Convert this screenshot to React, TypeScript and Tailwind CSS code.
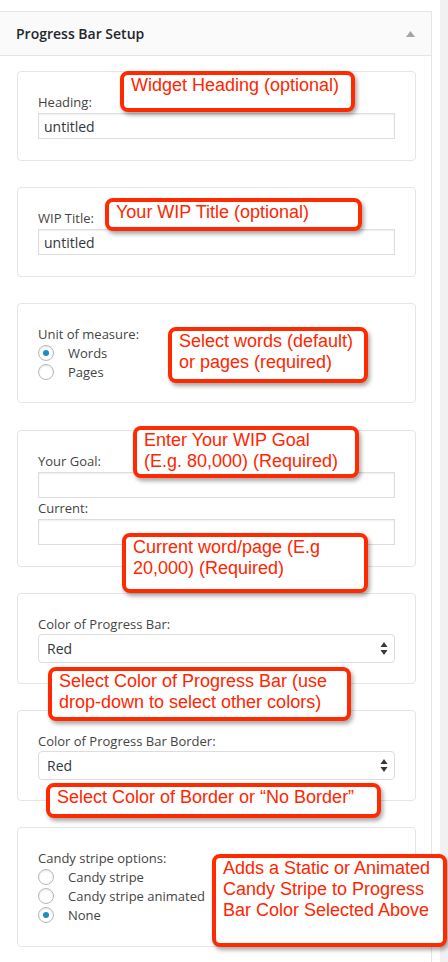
import type { ReactNode } from "react";

const wpFont = "font-['Open_Sans',Lato,sans-serif]";
const labelCls = "block text-[13px] leading-[18px] text-[#444]";

const callouts = [
  {
    pos: "left-[120px] top-[71px] w-[235px] h-[41px]",
    lines: ["Widget Heading (optional)"],
  },
  {
    pos: "left-[105px] top-[198px] w-[257px] h-[33px]",
    lines: ["Your WIP Title (optional)"],
  },
  {
    pos: "left-[168px] top-[327px] w-[200px] h-[56px]",
    lines: ["Select words (default)", "or pages (required)"],
  },
  {
    pos: "left-[133px] top-[426px] w-[226px] h-[52px]",
    lines: ["Enter Your WIP Goal", "(E.g. 80,000) (Required)"],
  },
  {
    pos: "left-[122px] top-[533px] w-[246px] h-[60px]",
    lines: ["Current word/page (E.g", "20,000) (Required)"],
  },
  {
    pos: "left-[48px] top-[667px] w-[303px] h-[54px]",
    lines: ["Select Color of Progress Bar (use", "drop-down to select other colors)"],
  },
  {
    pos: "left-[46px] top-[783px] w-[335px] h-[35px]",
    lines: ["Select Color of Border or \u201cNo Border\u201d"],
  },
  {
    pos: "left-[212px] top-[854px] w-[235px] h-[93px]",
    lines: ["Adds a Static or Animated", "Candy Stripe to Progress", "Bar Color Selected Above"],
  },
];

function Card({ children, className = "" }: { children: ReactNode; className?: string }) {
  return (
    <div className={`rounded-[4px] border border-[#e5e5e5] bg-white px-[20px] pt-[21px] ${className}`}>
      {children}
    </div>
  );
}

function TextInput({ value = "" }: { value?: string }) {
  return (
    <div className="mt-[2px] flex h-[26px] items-center border border-[#ddd] bg-white pl-[5px] text-[14px] text-[#32373c] shadow-[inset_0_1px_2px_rgba(0,0,0,0.07)]">
      {value}
    </div>
  );
}

function SelectBox({ value }: { value: string }) {
  return (
    <div className="mt-[1px] flex h-[29px] items-center justify-between rounded-[4px] border border-[#ddd] bg-white pl-[8px] pr-[6px] text-[14px] text-[#32373c]">
      <span>{value}</span>
      <svg width="8" height="13" viewBox="0 0 8 13">
        <path d="M4 0 L7.5 5 L0.5 5 Z" fill="#32373c" />
        <path d="M0.5 8 L7.5 8 L4 13 Z" fill="#32373c" />
      </svg>
    </div>
  );
}

function Radio({ label, checked = false }: { label: string; checked?: boolean }) {
  return (
    <div className="flex h-[19px] items-center">
      <span className="flex h-[16px] w-[16px] shrink-0 items-center justify-center rounded-full border border-[#b4b9be] bg-white shadow-[inset_0_1px_2px_rgba(0,0,0,0.1)]">
        {checked && <span className="h-[6px] w-[6px] rounded-full bg-[#1e8cbe]" />}
      </span>
      <span className="ml-[14px] text-[13px] leading-[18px] text-[#444]">{label}</span>
    </div>
  );
}

export default function App() {
  return (
    <div className={`relative flex h-[962px] overflow-hidden bg-white ${wpFont}`}>
      <div className="w-[440px] shrink-0 pt-[11px]">
        <div className="w-[432px] border-y border-r border-[#e5e5e5] bg-white">
          <div className="flex h-[44px] items-center justify-between border-b border-[#e5e5e5] bg-[#fafafa] pl-[16px] pr-[16px]">
            <span className="text-[14px] font-semibold text-[#23282d]">Progress Bar Setup</span>
            <svg width="9" height="6" viewBox="0 0 9 6">
              <path d="M4.5 0 L9 6 L0 6 Z" fill="#a0a5aa" />
            </svg>
          </div>

          <div className="ml-[17px] mr-[15px] flex flex-col gap-[26px] pb-[40px] pt-[15px]">
            <Card className="pb-[21px]">
              <label className={labelCls}>Heading:</label>
              <TextInput value="untitled" />
            </Card>

            <Card className="pb-[21px]">
              <label className={labelCls}>WIP Title:</label>
              <TextInput value="untitled" />
            </Card>

            <Card className="pb-[21px]">
              <label className={labelCls}>Unit of measure:</label>
              <Radio label="Words" checked />
              <Radio label="Pages" />
            </Card>

            <Card className="mt-px pb-[21px]">
              <label className={labelCls}>Your Goal:</label>
              <TextInput />
              <label className={`${labelCls} mt-[1px]`}>Current:</label>
              <TextInput />
            </Card>

            <Card className="pb-[20px]">
              <label className={labelCls}>Color of Progress Bar:</label>
              <SelectBox value="Red" />
            </Card>

            <Card className="pb-[20px]">
              <label className={labelCls}>Color of Progress Bar Border:</label>
              <SelectBox value="Red" />
            </Card>

            <Card className="pb-[22px]">
              <label className={labelCls}>Candy stripe options:</label>
              <Radio label="Candy stripe" />
              <Radio label="Candy stripe animated" />
              <Radio label="None" checked />
            </Card>
          </div>
        </div>
      </div>
      <div className="flex-1 bg-[#f1f1f1]" />

      {callouts.map((c, i) => (
        <div
          key={i}
          className={`absolute ${c.pos} rounded-[8px] border-[4px] border-[#ff2a00] bg-white pl-[7px] font-['Liberation_Sans',Arial,sans-serif] text-[18px] leading-[21px] text-[#ff2600] shadow-[2px_3px_4px_rgba(0,0,0,0.35)]`}
        >
          {c.lines.map((line, j) => (
            <div key={j} className="whitespace-nowrap">
              {line}
            </div>
          ))}
        </div>
      ))}
    </div>
  );
}
